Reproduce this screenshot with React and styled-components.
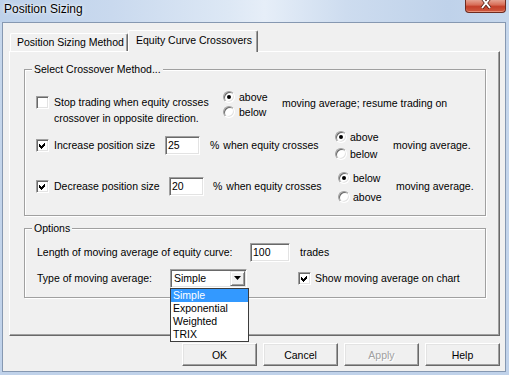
import React from 'react';
import styled, { createGlobalStyle } from 'styled-components';

const Global = createGlobalStyle`
  html, body { margin: 0; padding: 0; }
  body {
    width: 509px; height: 375px; overflow: hidden;
    font-family: "Liberation Sans", Arial, sans-serif;
    font-size: 10.5px; color: #000;
  }
  * { box-sizing: border-box; }
`;

const Window = styled.div`
  width: 509px; height: 375px;
  display: flex; flex-direction: column;
  background: #c4d5ea;
`;

const TitleBar = styled.div`
  height: 22px; flex: none;
  display: flex; justify-content: space-between; align-items: flex-start;
  background: linear-gradient(90deg, #bdd1ea 0%, #c9d9ee 22%, #dde8f5 45%, #e6eef8 52%, #cddcef 68%, #bfd2ea 88%, #c6d7ec 100%);
`;

const Title = styled.div`
  padding: 2px 0 0 4px;
  font-size: 12px; line-height: 14px;
  text-shadow: 0 0 5px rgba(255,255,255,0.9), 0 0 2px rgba(255,255,255,0.9);
`;

const CloseButton = styled.div`
  width: 41px; height: 13px; margin-right: 3px;
  border: 1px solid #6e2b1f; border-top: none;
  border-radius: 0 0 4px 4px;
  background: linear-gradient(#e5a291 0%, #d86e58 40%, #c4402a 55%, #cf5a40 100%);
  box-shadow: inset 0 -1px 0 rgba(255,200,180,0.5);
  display: flex; justify-content: center; align-items: flex-start;
`;

const Frame = styled.div`
  flex: 1; display: flex; flex-direction: column;
  padding: 0 3px 3px 2px;
  background: linear-gradient(180deg, #c6d7ec, #c0d2ea);
`;

const Client = styled.div`
  flex: 1; display: flex; flex-direction: column;
  border: 1px solid #8698b1;
  background: #f0f0f0;
  padding: 7px 5px 0 6px;
`;

const TabRow = styled.div`
  height: 21px; flex: none;
  display: flex; align-items: flex-end;
  padding-left: 1px;
`;

const Tab = styled.div`
  position: relative;
  height: ${p => (p.$active ? 22 : 18)}px;
  width: ${p => p.$w}px;
  margin-bottom: ${p => (p.$active ? -1 : 0)}px;
  z-index: ${p => (p.$active ? 2 : 1)};
  background: #f0f0f0;
  border-top: 1px solid #fff;
  border-left: 1px solid #fff;
  border-right: 1px solid #696969;
  border-radius: 2px 2px 0 0;
  box-shadow: inset -1px 0 0 #a0a0a0;
  padding-left: ${p => (p.$active ? 7 : 6)}px;
  line-height: ${p => (p.$active ? 18 : 16)}px;
  white-space: nowrap;
`;

const Panel = styled.div`
  height: 285px; width: 491px; flex: none;
  display: flex; flex-direction: column;
  background: #f0f0f0;
  border-top: 1px solid #fff;
  border-left: 1px solid #fff;
  border-right: 1px solid #696969;
  border-bottom: 1px solid #696969;
  box-shadow: inset -1px -1px 0 #a0a0a0;
  padding: 17px 13px 0 14px;
`;

const Group = styled.div`
  display: flex; flex-direction: column;
  margin-top: ${p => p.$mt || 0}px;
  border: 1px solid #a0a0a0;
  box-shadow: inset 1px 1px 0 #fff, 1px 1px 0 #fff;
  padding-bottom: ${p => p.$pb}px;
`;

const Caption = styled.div`
  align-self: flex-start;
  margin: -7px 0 0 7px;
  padding: 0 2px;
  line-height: 13px;
  background: #f0f0f0;
`;

const Row = styled.div`
  display: flex;
  align-items: ${p => p.$align || 'center'};
  height: ${p => p.$h}px;
  margin-top: ${p => p.$mt}px;
  padding-left: ${p => p.$pl}px;
`;

const CheckBox = styled.div`
  width: 13px; height: 13px; flex: none;
  margin-top: ${p => p.$mt || 0}px;
  margin-left: ${p => p.$ml || 0}px;
  background: #fff;
  border: 1px solid; border-color: #a0a0a0 #fff #fff #a0a0a0;
  box-shadow: inset 1px 1px 0 #696969, inset -1px -1px 0 #e3e3e3;
  display: flex; align-items: center; justify-content: center;
`;

const Text = styled.div`
  flex: none;
  line-height: ${p => p.$lh || 13}px;
  width: ${p => (p.$w ? `${p.$w}px` : 'auto')};
  margin-left: ${p => p.$ml || 0}px;
  margin-top: ${p => p.$mt || 0}px;
  white-space: nowrap;
`;

const Field = styled.div`
  width: ${p => p.$w}px; height: 19px; flex: none;
  background: #fff;
  border: 1px solid; border-color: #a0a0a0 #fff #fff #a0a0a0;
  box-shadow: inset 1px 1px 0 #696969, inset -1px -1px 0 #e3e3e3;
  padding: 0 0 0 2px;
  line-height: 17px;
`;

const Mid = styled.div`
  width: 125px; flex: none;
  margin-left: ${p => p.$ml}px;
  display: flex; gap: 4px;
  line-height: 13px;
`;

const RadioGroup = styled.div`
  width: ${p => p.$w}px; flex: none;
  display: flex; flex-direction: column;
  margin-top: ${p => p.$mt || 0}px;
  align-self: ${p => p.$self || 'auto'};
`;

const RadioItem = styled.div`
  height: ${p => p.$h}px;
  display: flex; align-items: center; gap: ${p => p.$gap || 4}px;
`;

const RadioCircle = styled.div`
  width: 12px; height: 12px; flex: none;
  border-radius: 50%;
  background: #fff;
  border: 1px solid; border-color: #a0a0a0 #fff #fff #a0a0a0;
  box-shadow: inset 1px 1px 0 #696969, inset -1px -1px 0 #e3e3e3;
  display: flex; align-items: center; justify-content: center;
`;

const Dot = styled.div`
  width: 4px; height: 4px; border-radius: 50%; background: #000;
`;

const SelectWrap = styled.div`
  position: relative; flex: none;
  width: 77px; height: 19px;
`;

const SelectBox = styled.div`
  width: 100%; height: 100%;
  display: flex; align-items: center;
  background: #fff;
  border: 1px solid; border-color: #a0a0a0 #fff #fff #a0a0a0;
  box-shadow: inset 1px 1px 0 #696969, inset -1px -1px 0 #e3e3e3;
  padding: 1px 1px 1px 3px;
`;

const SelectText = styled.div`
  flex: 1; line-height: 15px;
`;

const DropButton = styled.div`
  width: 15px; height: 15px; flex: none;
  background: #f0f0f0;
  border: 1px solid; border-color: #e3e3e3 #696969 #696969 #e3e3e3;
  box-shadow: inset 1px 1px 0 #fff, inset -1px -1px 0 #a0a0a0;
  display: flex; align-items: center; justify-content: center;
`;

const DropList = styled.div`
  position: absolute; left: 0; top: 100%;
  width: 79px; z-index: 5;
  background: #fff;
  border: 1px solid #3c3c3c;
`;

const DropItem = styled.div`
  height: 13px; line-height: 13px;
  padding-left: 2px;
  background: ${p => (p.$selected ? '#3399ff' : '#fff')};
  color: ${p => (p.$selected ? '#fff' : '#000')};
`;

const ButtonRow = styled.div`
  display: flex; justify-content: flex-end; gap: 6px;
  margin-top: 7px;
`;

const Button = styled.div`
  width: 75px; height: 23px;
  display: flex; align-items: center; justify-content: center;
  background: #f0f0f0;
  border: 1px solid; border-color: #fff #696969 #696969 #fff;
  box-shadow: inset -1px -1px 0 #a0a0a0, inset 1px 1px 0 #e3e3e3;
  color: ${p => (p.$disabled ? '#a0a0a0' : '#000')};
  text-shadow: ${p => (p.$disabled ? '1px 1px 0 #fff' : 'none')};
`;

const Check = ({ checked, mt, ml }) => (
  <CheckBox $mt={mt} $ml={ml}>
    {checked && (
      <svg width="7" height="7" viewBox="0 0 7 7" shapeRendering="crispEdges">
        <polygon points="0,2 2,4 6,0 6,3 2,7 0,5" fill="#000" />
      </svg>
    )}
  </CheckBox>
);

const Radio = ({ label, checked, h, gap }) => (
  <RadioItem $h={h} $gap={gap}>
    <RadioCircle>{checked && <Dot />}</RadioCircle>
    <span>{label}</span>
  </RadioItem>
);

export default function App() {
  return (
    <>
      <Global />
      <Window>
        <TitleBar>
          <Title>Position Sizing</Title>
          <CloseButton>
            <svg width="12" height="9" viewBox="0 0 12 9">
              <path d="M2 -2 L10 8 M10 -2 L2 8" stroke="#4a1a12" strokeWidth="3.4" />
              <path d="M2 -2 L10 8 M10 -2 L2 8" stroke="#fff" strokeWidth="2" />
            </svg>
          </CloseButton>
        </TitleBar>
        <Frame>
          <Client>
            <TabRow>
              <Tab $w={118}>Position Sizing Method</Tab>
              <Tab $w={130} $active>Equity Curve Crossovers</Tab>
            </TabRow>
            <Panel>
              <Group $pb={10}>
                <Caption>Select Crossover Method...</Caption>
                <Row $h={38} $mt={12} $pl={11} $align="flex-start">
                  <Check mt={8} />
                  <Text $ml={5} $w={169} $lh={16} $mt={6}>
                    Stop trading when equity crosses
                    <br />
                    crossover in opposite direction.
                  </Text>
                  <RadioGroup $w={59} $mt={1}>
                    <Radio label="above" checked h={15} gap={4} />
                    <Radio label="below" h={15} gap={4} />
                  </RadioGroup>
                  <Text $lh={16} $mt={7}>moving average; resume trading on</Text>
                </Row>
                <Row $h={34} $mt={2} $pl={11}>
                  <Check checked />
                  <Text $ml={5} $w={111}>Increase position size</Text>
                  <Field $w={35}>25</Field>
                  <Mid $ml={10}>
                    <span>%</span>
                    <span>when equity crosses</span>
                  </Mid>
                  <RadioGroup $w={58}>
                    <Radio label="above" checked h={17} gap={3} />
                    <Radio label="below" h={17} gap={3} />
                  </RadioGroup>
                  <Text>moving average.</Text>
                </Row>
                <Row $h={38} $mt={5} $pl={11}>
                  <Check checked />
                  <Text $ml={5} $w={115}>Decrease position size</Text>
                  <Field $w={35}>20</Field>
                  <Mid $ml={9}>
                    <span>%</span>
                    <span>when equity crosses</span>
                  </Mid>
                  <RadioGroup $w={58} $self="flex-start" $mt={1}>
                    <Radio label="below" checked h={19} gap={3} />
                    <Radio label="above" h={19} gap={3} />
                  </RadioGroup>
                  <Text>moving average.</Text>
                </Row>
              </Group>
              <Group $mt={12} $pb={9}>
                <Caption>Options</Caption>
                <Row $h={20} $mt={7} $pl={12}>
                  <Text $w={213}>Length of moving average of equity curve:</Text>
                  <Field $w={40}>100</Field>
                  <Text $ml={10}>trades</Text>
                </Row>
                <Row $h={20} $mt={6} $pl={12}>
                  <Text $w={133}>Type of moving average:</Text>
                  <SelectWrap>
                    <SelectBox>
                      <SelectText>Simple</SelectText>
                      <DropButton>
                        <svg width="7" height="4" viewBox="0 0 7 4">
                          <polygon points="0,0 7,0 3.5,4" fill="#000" />
                        </svg>
                      </DropButton>
                    </SelectBox>
                    <DropList>
                      <DropItem $selected>Simple</DropItem>
                      <DropItem>Exponential</DropItem>
                      <DropItem>Weighted</DropItem>
                      <DropItem>TRIX</DropItem>
                    </DropList>
                  </SelectWrap>
                  <Check checked ml={51} />
                  <Text $ml={4}>Show moving average on chart</Text>
                </Row>
              </Group>
            </Panel>
            <ButtonRow>
              <Button>OK</Button>
              <Button>Cancel</Button>
              <Button $disabled>Apply</Button>
              <Button>Help</Button>
            </ButtonRow>
          </Client>
        </Frame>
      </Window>
    </>
  );
}
